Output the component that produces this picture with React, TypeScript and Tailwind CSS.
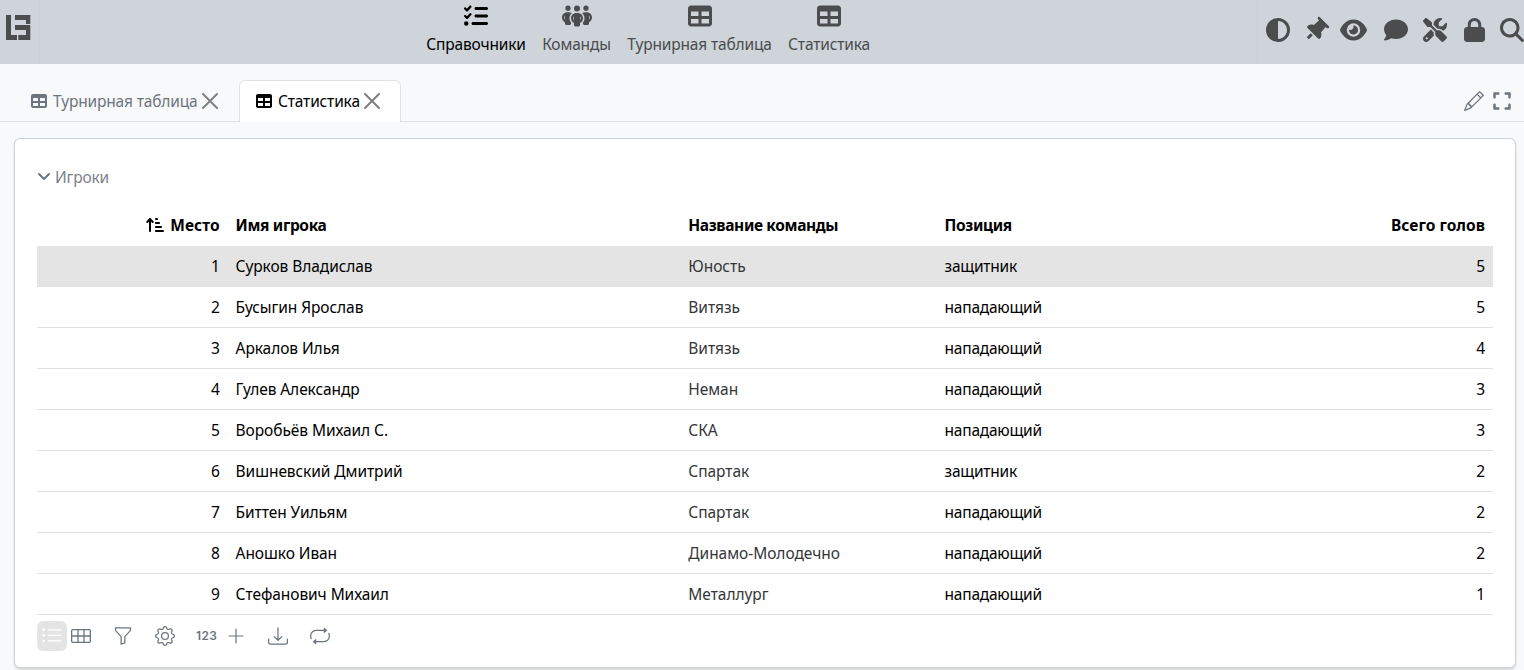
import React from "react";
import {
  FaListCheck, FaPeopleGroup, FaTable, FaCircleHalfStroke, FaThumbtack, FaEye, FaComment,
  FaScrewdriverWrench, FaLock, FaMagnifyingGlass, FaExpand, FaArrowUpShortWide,
} from "react-icons/fa6";
import { BsListUl, BsFunnel, BsGear, BsDownload, BsPencil, BsRepeat } from "react-icons/bs";

type Player = [name: string, team: string, position: string, goals: number];

const players: Player[] = [
  ["Сурков Владислав", "Юность", "защитник", 5],
  ["Бусыгин Ярослав", "Витязь", "нападающий", 5],
  ["Аркалов Илья", "Витязь", "нападающий", 4],
  ["Гулев Александр", "Неман", "нападающий", 3],
  ["Воробьёв Михаил С.", "СКА", "нападающий", 3],
  ["Вишневский Дмитрий", "Спартак", "защитник", 2],
  ["Биттен Уильям", "Спартак", "нападающий", 2],
  ["Аношко Иван", "Динамо-Молодечно", "нападающий", 2],
  ["Стефанович Михаил", "Металлург", "нападающий", 1],
];

const columns = "grid grid-cols-[190.6px_452.7px_256.3px_1fr_180px] items-center";

function Close() {
  return (
    <svg width="16" height="16" viewBox="0 0 16 16" fill="none" stroke="#808080" strokeWidth="2" strokeLinecap="round">
      <path d="M1 1l14 14M15 1L1 15" />
    </svg>
  );
}

function GridIcon() {
  return (
    <svg width="20" height="14" viewBox="0 0 20 14" fill="none" stroke="currentColor" strokeWidth="1.3">
      <rect x="0.65" y="0.65" width="18.7" height="12.7" rx="1" />
      <path d="M0.5 7h19M7 0.5v13M13 0.5v13" />
    </svg>
  );
}

function NavItem({ icon, label, className }: { icon: React.ReactNode; label: string; className: string }) {
  return (
    <div className={`flex flex-col items-center gap-1 pt-1 ${className}`}>
      {icon}
      <span className="whitespace-nowrap">{label}</span>
    </div>
  );
}

export default function App() {
  return (
    <div className="flex h-[670px] w-full flex-col overflow-hidden bg-[#f8f9fb] font-['Noto_Sans','Open_Sans',sans-serif] text-[15.5px] leading-6 tracking-[-0.16px] text-black">
      <header className="flex h-16 shrink-0 justify-between bg-[#ced4da] text-[#4a4c4e]">
        <div className="flex">
          <div className="w-10 border-r border-[#cdd0d3] pl-[6px] pt-[15px]">
            <svg width="25" height="25" viewBox="0 0 25 25" fill="currentColor">
              <path d="M0 0h5v20h6v5H0zM9 0h15.3v9H20V5H9zM9 10h15.3v15H12.3v-5H20v-5H9z" />
            </svg>
          </div>
          <nav className="ml-[378px] flex">
            <NavItem className="w-[116px] text-black" icon={<FaListCheck size={24} />} label="Справочники" />
            <NavItem className="w-[85px]" icon={<FaPeopleGroup className="h-6 w-[30px]" />} label="Команды" />
            <NavItem className="w-[161px]" icon={<FaTable size={24} />} label="Турнирная таблица" />
            <NavItem className="w-[98px]" icon={<FaTable size={24} />} label="Статистика" />
          </nav>
        </div>
        <div className="flex h-16 w-[267px] items-center border-l border-[#cdd0d3] pb-1">
          <div className="flex w-10 justify-center"><FaCircleHalfStroke size={24} /></div>
          <div className="flex w-[35px] justify-center"><FaThumbtack className="h-6 w-[18px] rotate-45" /></div>
          <div className="flex w-10 justify-center"><FaEye className="h-6 w-[27px]" /></div>
          <div className="flex w-[45px] justify-center"><FaComment size={24} /></div>
          <div className="flex w-[34px] justify-center"><FaScrewdriverWrench size={24} /></div>
          <div className="flex w-11 justify-center"><FaLock className="h-6 w-[21px]" /></div>
          <div className="flex w-7 pl-1"><FaMagnifyingGlass className="shrink-0" size={24} /></div>
        </div>
      </header>

      <div className="flex h-[58px] shrink-0 pt-4">
        <div className="flex w-[239px] items-center border-b border-[#dee2e6] pl-[31px] text-[#6c757d]">
          <FaTable size={16} />
          <span className="ml-[6px] w-[149px] whitespace-nowrap">Турнирная таблица</span>
          <Close />
        </div>
        <div className="flex w-[162px] items-center rounded-t-md border border-b-0 border-[#dee2e6] bg-white pb-[2px] pl-4">
          <FaTable size={16} />
          <span className="ml-[6px] w-[86px] whitespace-nowrap">Статистика</span>
          <Close />
        </div>
        <div className="flex flex-1 items-center justify-end gap-[9px] border-b border-[#dee2e6] pr-[13px] text-[#6c757d]">
          <BsPencil size={20} />
          <FaExpand className="h-5 w-[18px]" />
        </div>
      </div>

      <main className="mx-[14px] mt-4 flex h-[530px] w-[1502px] shrink-0 flex-col rounded-md border border-[#ced1d4] bg-white px-[22px] shadow-[0_2px_2px_#d8d8d8]">
        <div className="mt-[26px] flex h-6 items-center gap-1 text-[#7c838a]">
          <svg width="14" height="14" viewBox="0 0 14 14" fill="none" stroke="#6c757d" strokeWidth="2" strokeLinecap="round" strokeLinejoin="round">
            <path d="M2 4l5 5 5-5" />
          </svg>
          <span>Игроки</span>
        </div>
        <div className={`${columns} mt-4 h-[41px] pb-[2px] font-bold tracking-[-0.36px]`}>
          <div className="flex items-center justify-end gap-[5px] pr-2">
            <FaArrowUpShortWide className="h-4 w-[20px]" />
            <span className="tracking-[0.05px]">Место</span>
          </div>
          <div className="pl-2">Имя игрока</div>
          <div className="pl-2">Название команды</div>
          <div className="pl-2">Позиция</div>
          <div className="pr-2 text-right tracking-[0.05px]">Всего голов</div>
        </div>
        {players.map(([name, team, position, goals], i) => (
          <div key={name} className={`${columns} h-[41px] border-b border-[#dee2e6] ${i === 0 ? "bg-[#e4e4e4]" : ""}`}>
            <div className="pr-2 text-right">{i + 1}</div>
            <div className="pl-2 tracking-[-0.07px]">{name}</div>
            <div className="pl-2 tracking-[-0.04px] text-[#343638]">{team}</div>
            <div className="pl-2 tracking-[-0.24px]">{position}</div>
            <div className="pr-2 text-right">{goals}</div>
          </div>
        ))}
        <div className="mt-[6px] flex h-[30px] items-center text-[#6c757d]">
          <div className="flex size-[30px] items-center justify-center rounded-md bg-[#e4e4e4] text-white"><BsListUl size={22} /></div>
          <div className="ml-1"><GridIcon /></div>
          <BsFunnel size={20} className="ml-[22px]" />
          <BsGear size={20} className="ml-[22px]" />
          <span className="ml-[21px] w-[23px] font-['Inter',sans-serif] text-[12px] font-semibold tracking-[0.4px]">123</span>
          <svg className="ml-[9px]" width="16" height="16" viewBox="0 0 16 16" fill="none" stroke="currentColor" strokeWidth="1.2" strokeLinecap="round">
            <path d="M8 1v14M1 8h14" />
          </svg>
          <BsDownload size={20} className="ml-6" />
          <BsRepeat size={20} className="ml-[22px]" />
        </div>
      </main>
    </div>
  );
}
